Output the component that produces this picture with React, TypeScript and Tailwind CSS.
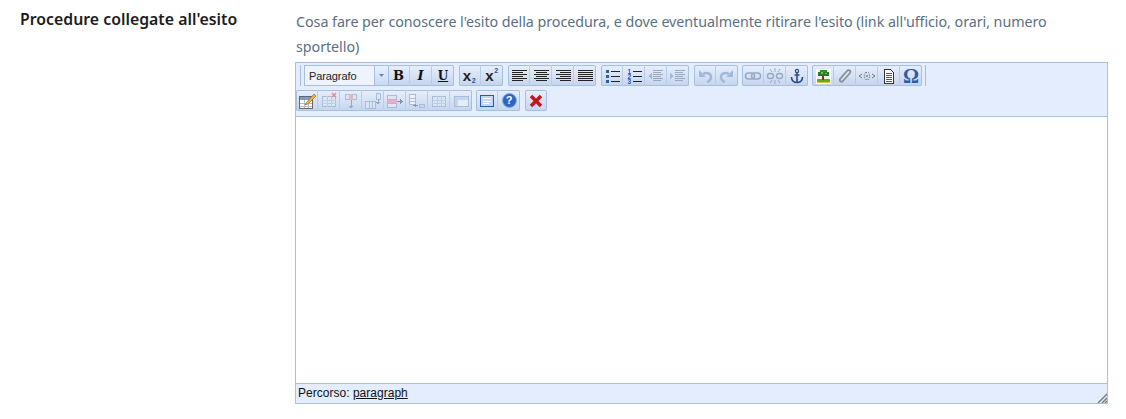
import React from "react";

const Ic = ({ children }: { children: React.ReactNode }) => (
  <svg width="20" height="20" viewBox="0 0 20 20" shapeRendering="crispEdges" className="block">
    {children}
  </svg>
);

const Sm = ({ children }: { children: React.ReactNode }) => (
  <svg width="20" height="20" viewBox="0 0 20 20" className="block">
    {children}
  </svg>
);

const Lines = ({ rows, color = "#222" }: { rows: [number, number][]; color?: string }) => (
  <>
    {rows.map(([x, w], i) => (
      <rect key={i} x={x} y={4 + i * 2} width={w} height={1} fill={color} />
    ))}
  </>
);

const Btn = ({ children, last }: { children: React.ReactNode; last?: boolean }) => (
  <div
    className={`w-[22px] h-[21px] flex items-center justify-center shrink-0 ${last ? "" : "border-r border-[#b9cce8]"}`}
  >
    {children}
  </div>
);

const Group = ({ children }: { children: React.ReactNode }) => (
  <div className="flex h-[21px] rounded-[2px] shadow-[inset_0_0_0_1px_#a8bedd] bg-gradient-to-b from-[#e8effd] via-[#d6e2f6] to-[#c4d4ee]">
    {children}
  </div>
);

const Sub = ({ up }: { up?: boolean }) => (
  <span className="relative -ml-[5px] font-['Liberation_Sans',sans-serif] font-bold text-[15px] leading-none text-[#222]">
    x
    <span
      className={`absolute left-[9px] text-[7px] leading-none font-bold text-[#2a4f9a] ${up ? "-top-[1px]" : "top-[9px]"}`}
    >
      2
    </span>
  </span>
);

const listLines = (
  <>
    <rect x="9" y="5" width="9" height="1" fill="#222" />
    <rect x="9" y="10" width="9" height="1" fill="#222" />
    <rect x="9" y="15" width="9" height="1" fill="#222" />
  </>
);

const Tablet = ({ hi }: { hi?: React.ReactNode }) => (
  <>
    <rect x="3.5" y="5.5" width="13" height="10" fill="#dbe6f5" stroke="#a9bcd8" />
    <path d="M3 9.5h14M3 12.5h14M8 5v11M12 5v11" stroke="#bccde4" />
    {hi}
  </>
);

const serif = "font-['DejaVu_Serif',serif] font-bold leading-none text-[#111]";

export default function App() {
  return (
    <div className="w-[1126px] h-[419px] bg-white flex overflow-hidden pt-[10px] font-['Noto_Sans',sans-serif]">
      <div className="w-[295px] pl-[20px] shrink-0">
        <div className="-mt-px text-[15.8px] font-semibold text-[#1c1c1c] leading-[20px] tracking-[0.02px]">
          Procedure collegate all'esito
        </div>
      </div>
      <div className="w-[814px] shrink-0">
        <div className="text-[14.3px] leading-[25px] text-[#5b6f82] pl-px -mt-px h-[53px] tracking-[-0.05px]">
          <div className="w-[780px]">
            Cosa fare per conoscere l'esito della procedura, e dove eventualmente ritirare l'esito (link all'ufficio, orari, numero sportello)
          </div>
        </div>
        <div className="w-[813px] h-[342px] border border-[#a9c3de] flex flex-col">
          <div className="h-[54px] bg-[#e4edfd] border-b border-[#a9c3de] shrink-0 pt-[2px]">
            <div className="flex h-[21px] items-center pl-[4px]">
              <div className="w-px h-[21px] bg-[#a8bedd] mr-[3px]" />
              <div className="w-[71px] h-[21px] border border-[#a8bedd] bg-[#eef3fd] flex items-center pl-[4px] pt-[2px] text-[11px] tracking-[-0.1px] text-[#222] font-['Liberation_Sans',sans-serif]">
                Paragrafo
              </div>
              <div className="w-[14px] h-[21px] border border-l-0 border-[#a8bedd] bg-gradient-to-b from-[#e9f0fd] to-[#c9d9f1] flex items-center justify-center">
                <svg width="5" height="3" viewBox="0 0 5 3"><path d="M0 0h5L2.500 3z" fill="#6b84ad" /></svg>
              </div>
              <div className="-ml-px">
                <Group>
                  <Btn><span className={`${serif} text-[13px]`}>B</span></Btn>
                  <Btn><span className={`${serif} italic text-[13px]`}>I</span></Btn>
                  <Btn last><span className={`${serif} underline text-[12px]`}>U</span></Btn>
                </Group>
              </div>
              <div className="w-[5px]" />
              <Group>
                <Btn><Sub /></Btn>
                <Btn last><Sub up /></Btn>
              </Group>
              <div className="w-[5px]" />
              <Group>
                <Btn><Ic><Lines rows={[[3,15],[3,11],[3,15],[3,11],[3,15],[3,11]]} /></Ic></Btn>
                <Btn><Ic><Lines rows={[[3,15],[5,11],[3,15],[5,11],[3,15],[5,11]]} /></Ic></Btn>
                <Btn><Ic><Lines rows={[[3,15],[7,11],[3,15],[7,11],[3,15],[7,11]]} /></Ic></Btn>
                <Btn last><Ic><Lines rows={[[3,15],[3,15],[3,15],[3,15],[3,15],[3,15]]} /></Ic></Btn>
              </Group>
              <div className="w-[5px]" />
              <Group>
                <Btn><Ic>
                  <rect x="4" y="4" width="3" height="3" fill="#2f5a9c" /><rect x="4" y="9" width="3" height="3" fill="#2f5a9c" /><rect x="4" y="14" width="3" height="3" fill="#2f5a9c" />
                  {listLines}
                </Ic></Btn>
                <Btn><Sm>
                  <text x="3.500" y="7.500" fontSize="6.500" fontWeight="700" fontFamily="Liberation Sans" fill="#2b57a8">1</text>
                  <text x="3.500" y="12.500" fontSize="6.500" fontWeight="700" fontFamily="Liberation Sans" fill="#2b57a8">2</text>
                  <text x="3.500" y="17.500" fontSize="6.500" fontWeight="700" fontFamily="Liberation Sans" fill="#2b57a8">3</text>
                  <g shapeRendering="crispEdges">{listLines}</g>
                </Sm></Btn>
                <Btn><Ic>
                  <path d="M2 10l4-3v6z" fill="#a3b8d6" />
                  <Lines color="#9aa9bf" rows={[[7,10],[7,8],[7,10],[7,8],[7,10],[7,8]]} />
                </Ic></Btn>
                <Btn last><Ic>
                  <path d="M6 10L2 7v6z" fill="#a3b8d6" />
                  <Lines color="#9aa9bf" rows={[[7,10],[7,8],[7,10],[7,8],[7,10],[7,8]]} />
                </Ic></Btn>
              </Group>
              <div className="w-[5px]" />
              <Group>
                <Btn><Sm><path d="M4 4v7h7z" fill="#a3b8d8" /><path d="M8 8c3-2 8-1 8 3 0 2-1 4-4 5" fill="none" stroke="#a3b8d8" strokeWidth="2.400" /></Sm></Btn>
                <Btn last><Sm><path d="M16 4v7H9z" fill="#a3b8d8" /><path d="M12 8c-3-2-8-1-8 3 0 2 1 4 4 5" fill="none" stroke="#a3b8d8" strokeWidth="2.400" /></Sm></Btn>
              </Group>
              <div className="w-[4px]" />
              <Group>
                <Btn><Sm><rect x="2.500" y="7" width="9" height="6" rx="3" fill="none" stroke="#9aa9bf" strokeWidth="1.500" /><rect x="8.500" y="7" width="9" height="6" rx="3" fill="none" stroke="#9aa9bf" strokeWidth="1.500" /></Sm></Btn>
                <Btn><Sm><rect x="2.500" y="7.500" width="6" height="5" rx="2.500" fill="none" stroke="#9aa9bf" strokeWidth="1.400" /><rect x="11.500" y="7.500" width="6" height="5" rx="2.500" fill="none" stroke="#9aa9bf" strokeWidth="1.400" /><path d="M10 2v4M10 14v4M5 3l2 3M15 3l-2 3M5 17l2-3M15 17l-2-3" stroke="#9aa9bf" /></Sm></Btn>
                <Btn last><Sm><circle cx="10" cy="5" r="1.600" fill="none" stroke="#2c4a78" strokeWidth="1.200" /><path d="M10 6.500V16M7.500 9h5" stroke="#2c4a78" strokeWidth="1.600" /><path d="M4.500 11c0 3.500 2.500 5.500 5.500 5.500s5.500-2 5.500-5.500" fill="none" stroke="#2c4a78" strokeWidth="1.600" /></Sm></Btn>
              </Group>
              <div className="w-[4px]" />
              <Group>
                <Btn><Ic>
                  <rect x="3" y="3" width="15" height="15" fill="#fff" />
                  <rect x="4" y="4" width="13" height="9" fill="#eef5f0" />
                  <rect x="4" y="13" width="13" height="3" fill="#5cb01f" />
                  <rect x="4" y="16" width="13" height="1" fill="#e4c53a" />
                  <rect x="5" y="6" width="11" height="4" fill="#1f7f22" />
                  <rect x="7" y="4" width="7" height="2" fill="#2e9129" />
                  <rect x="8" y="6" width="2" height="2" fill="#7cc13c" />
                  <rect x="12" y="7" width="2" height="1" fill="#7cc13c" />
                  <rect x="9" y="10" width="2" height="4" fill="#7a3f14" />
                </Ic></Btn>
                <Btn><Sm><path d="M5 13l7-8c2-2 4.500 0 3 2l-7 8c-1.500 1.500-4 .5-3-2l6-7" fill="none" stroke="#8a8f96" strokeWidth="1.800" /></Sm></Btn>
                <Btn><Sm><path d="M2 10l3-2M2 10l3 2M18 10l-3-2M18 10l-3 2" stroke="#777" strokeWidth="1" /><path d="M8.500 6.500h3L13 10l-1.500 3.500h-3L7 10z" fill="none" stroke="#777" strokeWidth="1" strokeDasharray="1.500 1" /><circle cx="10" cy="10" r="1" fill="#777" /></Sm></Btn>
                <Btn><Ic>
                  <path d="M5.500 3.500h6l3 3v11h-9z" fill="#fff" stroke="#333" />
                  <path d="M7 7h6M7 9h6M7 11h6M7 13h6M7 15h6" stroke="#555" />
                </Ic></Btn>
                <Btn last><span className="font-['Liberation_Serif',serif] font-bold text-[20px] leading-none text-[#2b5ca8]">Ω</span></Btn>
              </Group>
              <div className="w-px h-[21px] bg-[#a8bedd] ml-[3px]" />
            </div>
            <div className="flex h-[21px] mt-[4px]">
              <Group>
                <Btn><Ic>
                  <rect x="2.500" y="5.500" width="13" height="12" fill="#fff" stroke="#666" />
                  <rect x="3" y="6" width="12" height="3" fill="#7f9bc8" />
                  <path d="M3 12h12M3 15h12M7 9v8M11 9v8" stroke="#b4bcc6" />
                  <path d="M9 12L17 3l2 2-8 8-3 1z" fill="#f1b23f" stroke="#8a5a12" strokeWidth=".6" shapeRendering="auto" />
                </Ic></Btn>
                <Btn><Ic><Tablet hi={<path d="M13 2l4 4M17 2l-4 4" stroke="#e58a92" strokeWidth="1.500" shapeRendering="auto" />} /></Ic></Btn>
                <Btn><Ic>
                  <path d="M4.500 3.500h11v5h-11z" fill="#dbe6f5" stroke="#a9bcd8" />
                  <rect x="8" y="3" width="4" height="6" fill="#e8b4bb" />
                  <path d="M10 9v8" stroke="#98a8bf" />
                  <path d="M8 15l2 3 2-3z" fill="#98a8bf" />
                </Ic></Btn>
                <Btn><Ic>
                  <path d="M2.500 10.500h10v7h-10zM6 11v7M9 11v7" fill="#dbe6f5" stroke="#a9bcd8" />
                  <rect x="13.500" y="2.500" width="4" height="6" fill="#dbe6f5" stroke="#a9bcd8" />
                  <path d="M15 8v4" stroke="#98a8bf" />
                  <path d="M13 11l2 3 2-3z" fill="#98a8bf" />
                </Ic></Btn>
                <Btn><Ic>
                  <path d="M2.500 4.500h9v12h-9zM3 8.500h9M3 12.500h9" fill="#dbe6f5" stroke="#a9bcd8" />
                  <rect x="3" y="9" width="9" height="3" fill="#e8b4bb" />
                  <path d="M12 10.500h4" stroke="#8094b4" />
                  <path d="M15 8l3 2.500-3 2.500z" fill="#8094b4" />
                </Ic></Btn>
                <Btn><Ic>
                  <path d="M2.500 3.500h6v10h-6zM3 7h6M3 10h6" fill="#eef3fb" stroke="#a9bcd8" />
                  <rect x="12.500" y="13.500" width="5" height="3" fill="#c6d6ec" stroke="#a9bcd8" />
                  <path d="M8 14.500h3" stroke="#8094b4" />
                  <path d="M9 12.500l-3 2 3 2z" fill="#8094b4" />
                </Ic></Btn>
                <Btn><Ic><Tablet /></Ic></Btn>
                <Btn last><Ic>
                  <rect x="3.500" y="5.500" width="14" height="10" fill="#e4ecf8" stroke="#a9bcd8" />
                  <rect x="4" y="6" width="13" height="3" fill="#c5d5ec" />
                  <rect x="4" y="9" width="3" height="6" fill="#c5d5ec" />
                </Ic></Btn>
              </Group>
              <div className="w-[4px]" />
              <Group>
                <Btn><Ic>
                  <rect x="3.500" y="4.500" width="13" height="11" fill="#c4d8f5" stroke="#2b5aa5" />
                  <rect x="6" y="7" width="8" height="1" fill="#fff" />
                  <rect x="6" y="10" width="8" height="1" fill="#fff" />
                  <rect x="6" y="12" width="6" height="1" fill="#fff" />
                </Ic></Btn>
                <Btn last>
                  <span className="w-[15px] h-[15px] rounded-full bg-[#2d66c2] border border-[#8cabdc] flex items-center justify-center text-white font-bold text-[11px] leading-none font-['Liberation_Sans',sans-serif]">?</span>
                </Btn>
              </Group>
              <div className="w-[5px]" />
              <Group>
                <Btn last><Sm><path d="M5 5l10 10M15 5L5 15" stroke="#c4161c" strokeWidth="3.500" /></Sm></Btn>
              </Group>
            </div>
          </div>
          <div className="flex-1 bg-white" />
          <div className="relative h-[20px] bg-[#e4edfd] border-t border-[#a9c3de] shrink-0 pl-[2px] text-[12px] tracking-[0.02px] leading-[19px] text-[#111] font-['Liberation_Sans',sans-serif]">
            Percorso: <span className="underline">paragraph</span>
            <svg className="absolute right-0 bottom-0" width="10" height="10" viewBox="0 0 10 10">
              <path d="M10 1L1 10M10 5L5 10M10 8L8 10" stroke="#777" strokeWidth="1.400" fill="none" />
            </svg>
          </div>
        </div>
      </div>
    </div>
  );
}
